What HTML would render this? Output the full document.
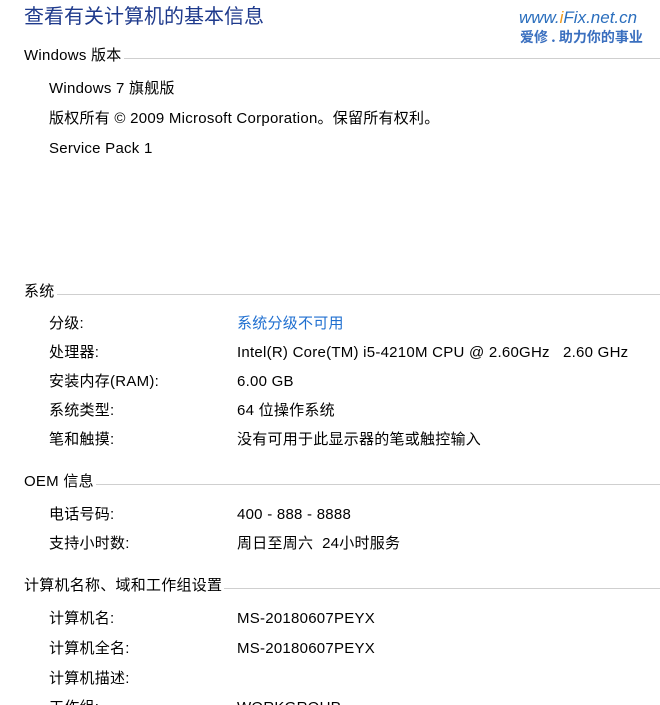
<!DOCTYPE html>
<html><head><meta charset="utf-8"><style>
html,body{margin:0;padding:0;background:#fff;width:660px;height:705px;overflow:hidden;position:relative;
font-family:"Liberation Sans","Microsoft YaHei","Noto Sans CJK SC",sans-serif;font-size:15px;letter-spacing:0.25px;color:#000}
body>div{margin-top:1px}
.t{position:absolute;white-space:nowrap;line-height:20px}
.title{position:absolute;left:24px;top:1px;font-size:20px;letter-spacing:0;line-height:26px;color:#1e3a8c;font-family:"Noto Sans CJK SC",sans-serif}
.h{position:absolute;left:24px;right:0;height:20px;line-height:20px;display:flex;align-items:center}
.h span{white-space:nowrap;padding-right:2px}
.h i{flex:1;border-top:1px solid #cfcfcf;margin-top:4px}
.l{left:49px}.v{left:237px}
.logo1{position:absolute;left:519px;top:7px;font-size:17px;letter-spacing:0;font-style:italic;color:#2a6ebd;line-height:20px}
.logo1 b{color:#f09a1a;font-weight:normal}
.logo2{position:absolute;left:520px;top:26px;font-size:14px;letter-spacing:0;font-weight:bold;color:#3a6fbf;line-height:20px;font-family:"Noto Sans CJK SC",sans-serif}
</style></head><body>
<div class="title">查看有关计算机的基本信息</div>
<div class="logo1">www.<b>i</b>Fix.net.cn</div>
<div class="logo2">爱修 . 助力你的事业</div>

<div class="h" style="top:45px"><span>Windows 版本</span><i></i></div>
<div class="t l" style="top:78px">Windows 7 旗舰版</div>
<div class="t l" style="top:108px">版权所有 © 2009 Microsoft Corporation。保留所有权利。</div>
<div class="t l" style="top:138px">Service Pack 1</div>

<div class="h" style="top:281px"><span>系统</span><i></i></div>
<div class="t l" style="top:313px">分级:</div><div class="t v" style="top:313px;color:#1f6fd0">系统分级不可用</div>
<div class="t l" style="top:342px">处理器:</div><div class="t v" style="top:342px">Intel(R) Core(TM) i5-4210M CPU @ 2.60GHz&nbsp;&nbsp; 2.60 GHz</div>
<div class="t l" style="top:371px">安装内存(RAM):</div><div class="t v" style="top:371px">6.00 GB</div>
<div class="t l" style="top:400px">系统类型:</div><div class="t v" style="top:400px">64 位操作系统</div>
<div class="t l" style="top:429px">笔和触摸:</div><div class="t v" style="top:429px">没有可用于此显示器的笔或触控输入</div>

<div class="h" style="top:471px"><span>OEM 信息</span><i></i></div>
<div class="t l" style="top:504px">电话号码:</div><div class="t v" style="top:504px">400 - 888 - 8888</div>
<div class="t l" style="top:533px">支持小时数:</div><div class="t v" style="top:533px">周日至周六&nbsp; 24小时服务</div>

<div class="h" style="top:575px"><span>计算机名称、域和工作组设置</span><i></i></div>
<div class="t l" style="top:608px">计算机名:</div><div class="t v" style="top:608px">MS-20180607PEYX</div>
<div class="t l" style="top:638px">计算机全名:</div><div class="t v" style="top:638px">MS-20180607PEYX</div>
<div class="t l" style="top:668px">计算机描述:</div>
<div class="t l" style="top:697px">工作组:</div><div class="t v" style="top:697px">WORKGROUP</div>
</body></html>
